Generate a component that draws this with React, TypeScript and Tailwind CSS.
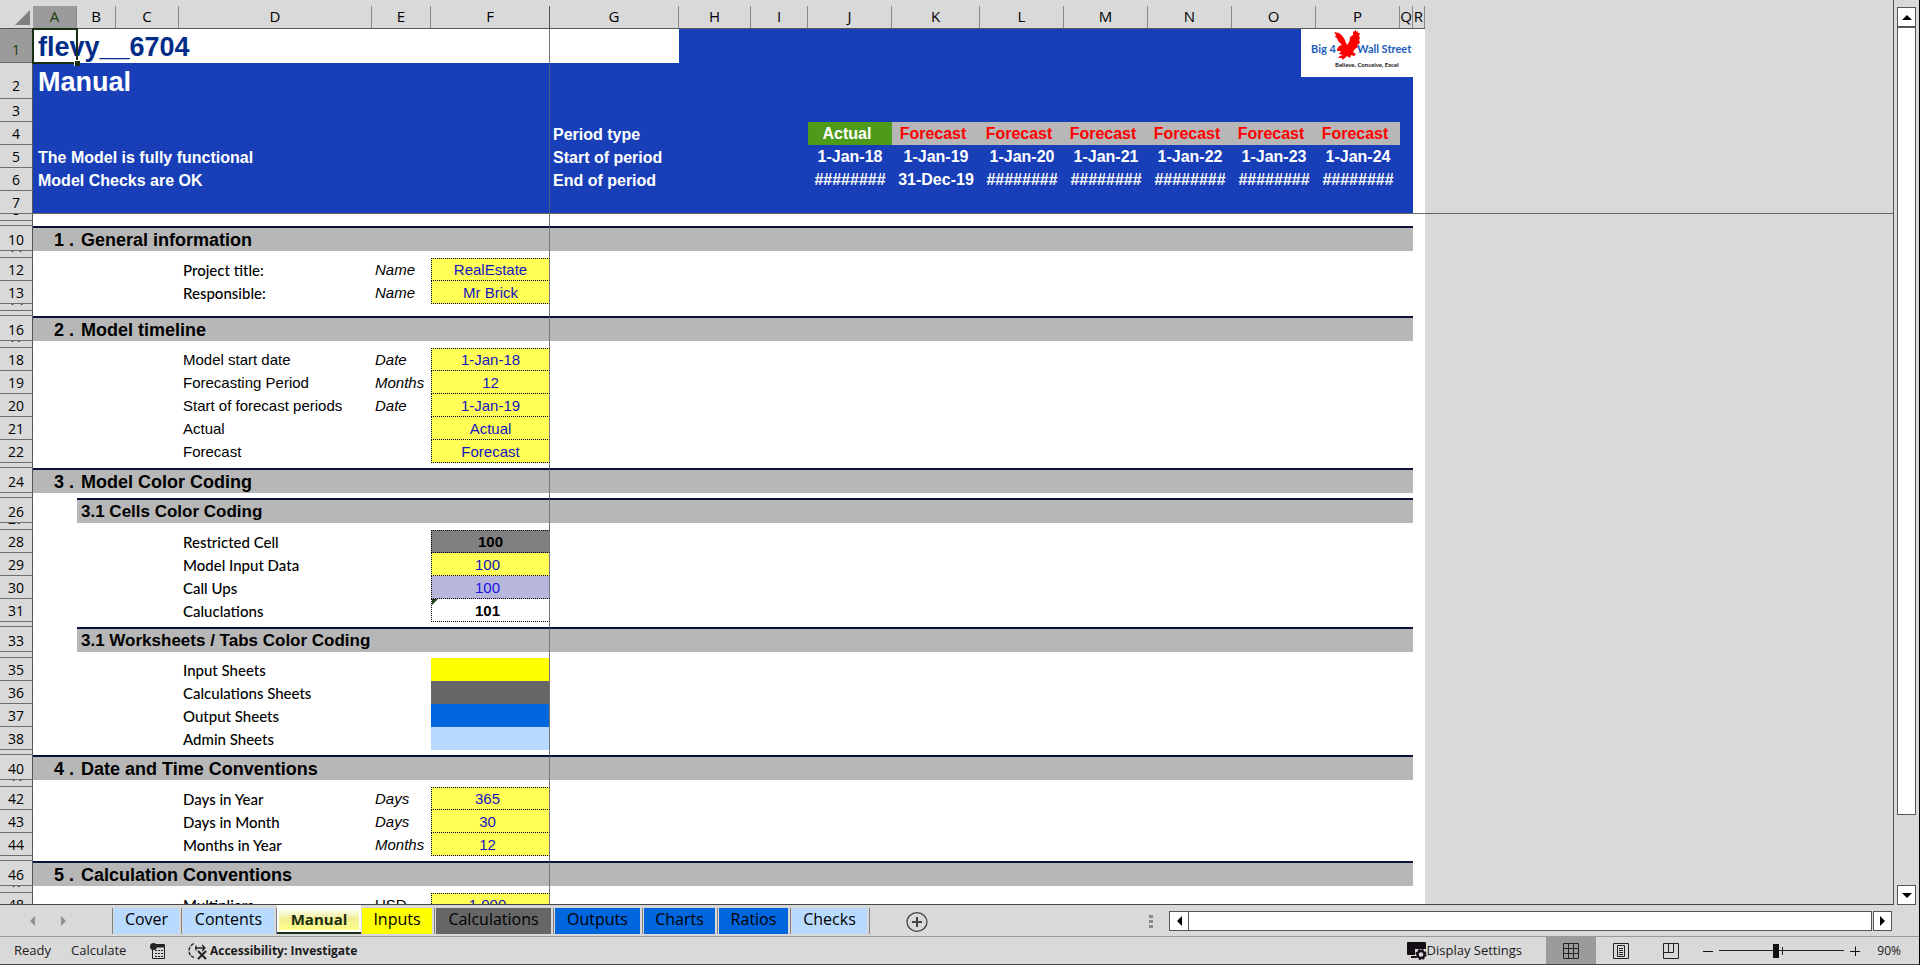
import React from "react";
import { clsx } from "clsx";

type Row = {
  n: number;
  kind: "section" | "sub" | "gap" | "line";
  h?: string;
  no?: string;
  title?: string;
  plain?: boolean;
  unit?: string;
  unitPlain?: boolean;
  value?: string;
  cell?: string;
  first?: boolean;
  flag?: boolean;
};

const dotted = "border-l border-b border-dotted border-l-black border-b-black";
const yellow = `${dotted} bg-[#ffff55] text-[#1414c0]`;
const yellowNumber = `${yellow} pr-1.5`;

const columns = [
  { name: "A", width: "w-[44px]" },
  { name: "B", width: "w-[39px]" },
  { name: "C", width: "w-[63px]" },
  { name: "D", width: "w-[193px]" },
  { name: "E", width: "w-[59px]" },
  { name: "F", width: "w-[119px]" },
  { name: "G", width: "w-[129px]" },
  { name: "H", width: "w-[72px]" },
  { name: "I", width: "w-[57px]" },
  { name: "J", width: "w-[84px]" },
  { name: "K", width: "w-[88px]" },
  { name: "L", width: "w-[84px]" },
  { name: "M", width: "w-[84px]" },
  { name: "N", width: "w-[84px]" },
  { name: "O", width: "w-[84px]" },
  { name: "P", width: "w-[84px]" },
  { name: "Q", width: "w-[13px]" },
  { name: "R", width: "w-[12px]" },
];

const rows: Row[] = [
  { n: 8, kind: "gap", h: "h-[7px]" },
  { n: 9, kind: "gap", h: "h-[5px]" },
  { n: 10, kind: "section", no: "1 .", title: "General information" },
  { n: 11, kind: "gap", h: "h-[7px]" },
  { n: 12, kind: "line", title: "Project title:", unit: "Name", value: "RealEstate", cell: yellow, first: true },
  { n: 13, kind: "line", title: "Responsible:", unit: "Name", value: "Mr Brick", cell: yellow },
  { n: 14, kind: "gap", h: "h-[7px]" },
  { n: 15, kind: "gap", h: "h-[5px]" },
  { n: 16, kind: "section", no: "2 .", title: "Model timeline" },
  { n: 17, kind: "gap", h: "h-[7px]" },
  { n: 18, kind: "line", title: "Model start date", plain: true, unit: "Date", value: "1-Jan-18", cell: yellow, first: true },
  { n: 19, kind: "line", title: "Forecasting Period", plain: true, unit: "Months", value: "12", cell: yellow },
  { n: 20, kind: "line", title: "Start of forecast periods", plain: true, unit: "Date", value: "1-Jan-19", cell: yellow },
  { n: 21, kind: "line", title: "Actual", plain: true, value: "Actual", cell: yellow },
  { n: 22, kind: "line", title: "Forecast", plain: true, value: "Forecast", cell: yellow },
  { n: 23, kind: "gap", h: "h-[5px]" },
  { n: 24, kind: "section", no: "3 .", title: "Model Color Coding" },
  { n: 25, kind: "gap", h: "h-[5px]" },
  { n: 26, kind: "sub", title: "3.1 Cells Color Coding" },
  { n: 27, kind: "gap", h: "h-[7px]" },
  { n: 28, kind: "line", title: "Restricted Cell", value: "100", cell: `${dotted} bg-[#808080] font-bold`, first: true },
  { n: 29, kind: "line", title: "Model Input Data", value: "100", cell: yellowNumber },
  { n: 30, kind: "line", title: "Call Ups", value: "100", cell: `${dotted} bg-[#b7b7dc] text-[#1414e6] pr-1.5` },
  { n: 31, kind: "line", title: "Caluclations", value: "101", cell: `${dotted} bg-white font-bold pr-1.5`, flag: true },
  { n: 32, kind: "gap", h: "h-[5px]" },
  { n: 33, kind: "sub", title: "3.1 Worksheets / Tabs Color Coding" },
  { n: 34, kind: "gap", h: "h-[6px]" },
  { n: 35, kind: "line", title: "Input Sheets", cell: "bg-[#ffff00]" },
  { n: 36, kind: "line", title: "Calculations Sheets", cell: "bg-[#666666]" },
  { n: 37, kind: "line", title: "Output Sheets", cell: "bg-[#0066dd]" },
  { n: 38, kind: "line", title: "Admin Sheets", cell: "bg-[#b8daff]" },
  { n: 39, kind: "gap", h: "h-[5px]" },
  { n: 40, kind: "section", no: "4 .", title: "Date and Time Conventions" },
  { n: 41, kind: "gap", h: "h-[7px]" },
  { n: 42, kind: "line", title: "Days in Year", unit: "Days", value: "365", cell: yellowNumber, first: true },
  { n: 43, kind: "line", title: "Days in Month", unit: "Days", value: "30", cell: yellowNumber },
  { n: 44, kind: "line", title: "Months in Year", unit: "Months", value: "12", cell: yellowNumber },
  { n: 45, kind: "gap", h: "h-[5px]" },
  { n: 46, kind: "section", no: "5 .", title: "Calculation Conventions" },
  { n: 47, kind: "gap", h: "h-[7px]" },
  { n: 48, kind: "line", title: "Multipliers", unit: "USD", unitPlain: true, value: "1,000", cell: yellowNumber, first: true },
];

const periods = [
  { type: "Actual", start: "1-Jan-18", end: "########" },
  { type: "Forecast", start: "1-Jan-19", end: "31-Dec-19" },
  { type: "Forecast", start: "1-Jan-20", end: "########" },
  { type: "Forecast", start: "1-Jan-21", end: "########" },
  { type: "Forecast", start: "1-Jan-22", end: "########" },
  { type: "Forecast", start: "1-Jan-23", end: "########" },
  { type: "Forecast", start: "1-Jan-24", end: "########" },
];

const tabs = [
  { name: "Cover", width: "w-[70px]", color: "bg-[#b8daff]" },
  { name: "Contents", width: "w-[95px]", color: "bg-[#b8daff]" },
  { name: "Manual", width: "w-[84px]", color: "" },
  { name: "Inputs", width: "w-[74px]", color: "bg-[#ffff00]" },
  { name: "Calculations", width: "w-[119px]", color: "bg-[#666666]" },
  { name: "Outputs", width: "w-[89px]", color: "bg-[#0066dd]" },
  { name: "Charts", width: "w-[75px]", color: "bg-[#0066dd]" },
  { name: "Ratios", width: "w-[73px]", color: "bg-[#0066dd]" },
  { name: "Checks", width: "w-[79px]", color: "bg-[#b8daff]" },
];

const RowNumber = ({ n, active }: { n: number; active?: boolean }) => (
  <th
    scope="row"
    className={clsx(
      "border-r border-b border-r-[#555] border-b-[#6e6e6e] px-0 pt-0 text-center align-bottom font-['Open_Sans',sans-serif] text-sm leading-5 font-normal",
      active ? "bg-[#9b9b9b] text-[#1c3a12]" : "bg-[#d9d9d9] text-black",
      n <= 2 ? "pb-0.5" : "pb-0",
    )}
  >
    {n}
  </th>
);

// Narrow rows only leave the feet of their number visible
const GapNumber = ({ n, h }: { n: number; h?: string }) => (
  <th scope="row" className="border-r border-b border-r-[#555] border-b-[#6e6e6e] bg-[#d9d9d9] p-0 font-normal">
    <div
      className={clsx(
        "flex items-end justify-center overflow-hidden font-['Open_Sans',sans-serif] text-sm leading-5",
        h === "h-[5px]" ? "h-1" : h === "h-[6px]" ? "h-[5px]" : "h-1.5",
      )}
    >
      {h !== "h-[5px]" && n}
    </div>
  </th>
);

const Logo = () => (
  <svg viewBox="0 0 112 48" className="absolute top-0 right-0 h-12 w-28" role="img" aria-label="Big 4 Wall Street">
    <rect width="112" height="48" fill="#fff" />
    <g fontFamily="Lato, sans-serif" fontWeight="700">
      <text x="10" y="24" fontSize="11" fill="#1a5db8">Big 4</text>
      <text x="56" y="24" fontSize="11" fill="#1a5db8">Wall Street</text>
      <text x="34" y="38" fontSize="6" fill="#111">Believe, Conceive, Excel</text>
    </g>
    <path
      d="M33 3 L38 4 C42 7 44 10 45 14 L46 16 C48 14 49 11 49 8 L52 6 L52 3 L55 1 L55 3 L57 2 L57 4 L59 4 L58 7 L59 9 L58 11 L59 14 L56 16 L57 18 L54 20 L52 23 L55 25 L53 27 L50 26 L49 29 L46 27 L44 29 L41 31 L41 29 L37 29 L39 27 L42 26 L38 25 L40 22 L36 22 L36 20 L38 17 L41 16 C38 13 36 11 36 9 L34 8 L35 6 Z"
      fill="#f00"
    />
  </svg>
);

const HeaderLead = ({ n, text, className }: { n: number; text?: string; className?: string }) => (
  <>
    <RowNumber n={n} />
    <td colSpan={6} className={clsx("border-r border-[#4a5a80] pt-0 pr-0 pl-[5px] align-bottom", className ?? "pb-0")}>
      {text}
    </td>
  </>
);

const HeaderEnd = () => (
  <>
    <td className="bg-white p-0" />
    <td className="bg-[#d9d9d9] p-0" />
  </>
);

const HeaderRows = () => (
  <>
    <tr className="h-[34px] font-bold">
      <RowNumber n={1} active />
      <td colSpan={6} className="relative border-r border-[#777] bg-white py-0 pr-0 pl-[5px] align-bottom text-[27px] leading-[31px] text-[#002b87]">
        flevy__6704
        <span className="absolute -top-px -left-px h-9 w-[46px] border-2 border-[#1a2e12]">
          <span className="absolute -right-1 -bottom-1 size-1.5 border-t border-l border-white bg-[#1a2e12]" />
        </span>
      </td>
      <td className="bg-white p-0" />
      <td colSpan={10} className="relative bg-[#183fb8] p-0">
        <Logo />
      </td>
      <td className="bg-white p-0" />
      <td className="p-0" />
    </tr>
    <tr className="h-9 bg-[#183fb8] font-bold text-white">
      <HeaderLead n={2} className="pb-px text-[27px] leading-[31px]" text="Manual" />
      <td colSpan={11} className="p-0" />
      <HeaderEnd />
    </tr>
    <tr className="h-[23px] bg-[#183fb8]">
      <HeaderLead n={3} />
      <td colSpan={11} className="p-0" />
      <HeaderEnd />
    </tr>
    <tr className="h-[23px] bg-[#183fb8] font-bold text-white">
      <HeaderLead n={4} />
      <td colSpan={3} className="py-0 pr-0 pl-[3px] align-bottom">Period type</td>
      {periods.map((p, i) => (
        <td
          key={i}
          className={clsx("py-0 pr-1.5 pb-px pl-0 text-center align-bottom", i === 0 ? "bg-[#4e9a19]" : "bg-[#b7b7b7] text-[#ff0000]")}
        >
          {p.type}
        </td>
      ))}
      <td className="p-0" />
      <HeaderEnd />
    </tr>
    <tr className="h-[23px] bg-[#183fb8] font-bold text-white">
      <HeaderLead n={5} text="The Model is fully functional" />
      <td colSpan={3} className="py-0 pr-0 pl-[3px] align-bottom">Start of period</td>
      {periods.map((p, i) => (
        <td key={i} className="p-0 pb-px text-center align-bottom">{p.start}</td>
      ))}
      <td className="p-0" />
      <HeaderEnd />
    </tr>
    <tr className="h-[23px] bg-[#183fb8] font-bold text-white">
      <HeaderLead n={6} text="Model Checks are OK" />
      <td colSpan={3} className="py-0 pr-0 pl-[3px] align-bottom">End of period</td>
      {periods.map((p, i) => (
        <td key={i} className="p-0 pb-px text-center align-bottom">{p.end}</td>
      ))}
      <td className="p-0" />
      <HeaderEnd />
    </tr>
    <tr className="h-[23px] bg-[#183fb8]">
      <RowNumber n={7} />
      <td colSpan={6} className="border-r border-b border-r-[#4a5a80] border-b-[#666] p-0" />
      <td colSpan={11} className="border-b border-[#666] p-0" />
      <td className="border-b border-[#666] bg-white p-0" />
      <td className="border-b border-[#666] bg-[#d9d9d9] p-0" />
    </tr>
  </>
);

const BodyRow = ({ row }: { row: Row }) => {
  if (row.kind === "gap") {
    return (
      <tr className={row.h}>
        <GapNumber n={row.n} h={row.h} />
        <td colSpan={6} className="border-r border-[#777] bg-white p-0" />
        <td colSpan={12} className="bg-white p-0" />
        <td className="p-0" />
      </tr>
    );
  }
  if (row.kind === "section" || row.kind === "sub") {
    const bar = "border-t-2 border-t-[#0a1238] bg-[#b7b7b7]";
    return (
      <tr className="h-[25px] font-bold">
        <RowNumber n={row.n} />
        <td className={clsx("py-0 pr-[3px] pl-0 text-right align-bottom text-lg leading-[22px]", row.kind === "section" ? bar : "bg-white")}>
          {row.no}
        </td>
        <td
          colSpan={5}
          className={clsx(
            "border-r border-r-[#777] py-0 pr-0 pl-1 align-bottom whitespace-nowrap",
            bar,
            row.kind === "section" ? "text-lg leading-[22px]" : "text-[17px] leading-[22px]",
          )}
        >
          {row.title}
        </td>
        <td colSpan={11} className={clsx("p-0", bar)} />
        <td className="bg-white p-0" />
        <td className="p-0" />
      </tr>
    );
  }
  return (
    <tr className="h-[23px] text-[15px] leading-5">
      <RowNumber n={row.n} />
      <td colSpan={3} className="bg-white p-0" />
      <td
        className={clsx(
          "bg-white pt-0 pr-0 pb-px pl-1 align-bottom whitespace-nowrap",
          !row.plain && "font-['Lato',sans-serif] font-medium",
        )}
      >
        {row.title}
      </td>
      <td className={clsx("bg-white pt-0 pr-0 pb-px pl-[3px] align-bottom", !row.unitPlain && "italic")}>{row.unit}</td>
      <td
        className={clsx(
          "relative border-r border-r-[#777] p-0 text-center align-bottom [border-right-style:solid]",
          row.first && "border-t border-t-black",
          row.cell,
        )}
      >
        {row.flag && (
          <svg viewBox="0 0 6 6" className="absolute top-0 left-0 size-1.5">
            <path d="M0 0h6L0 6z" fill="#1d4016" />
          </svg>
        )}
        {row.value}
      </td>
      <td colSpan={12} className="bg-white p-0" />
      <td className="p-0" />
    </tr>
  );
};

const Sheet = () => (
  <div className="min-w-0 flex-1 overflow-hidden border-b border-[#444]">
    <table className="w-full table-fixed border-separate border-spacing-0 font-['Liberation_Sans',Arial,sans-serif] text-base leading-5 text-black">
      <colgroup>
        <col className="w-[33px]" />
        {columns.map((c) => (
          <col key={c.name} className={c.width} />
        ))}
        <col />
      </colgroup>
      <thead>
        <tr className="h-[29px] font-['Open_Sans',sans-serif] text-[15px]">
          <td className="border-b border-[#555] px-[3px] pt-2 pb-[3px] align-bottom">
            <svg viewBox="0 0 15 15" className="ml-auto size-[15px]">
              <path d="M15 0v15H0z" fill="#808080" />
            </svg>
          </td>
          {columns.map((c) => (
            <th key={c.name} scope="col" className="border-b border-[#555] px-0 pt-1.5 pb-0 font-normal">
              <div
                className={clsx(
                  "flex h-[22px] items-start justify-center border-r leading-5",
                  c.name === "A" && "bg-[#9b9b9b] text-[#1c3a12]",
                  c.name === "F" ? "border-[#555]" : "border-[#8a8a8a]",
                )}
              >
                {c.name}
              </div>
            </th>
          ))}
          <td className="p-0" />
        </tr>
      </thead>
      <tbody>
        <HeaderRows />
        {rows.map((row) => (
          <BodyRow key={row.n} row={row} />
        ))}
      </tbody>
    </table>
  </div>
);

const VerticalScroll = () => (
  <div className="flex w-[26px] shrink-0 flex-col border-l border-[#555] px-[3px] pt-[7px]">
    <button aria-label="Scroll up" className="flex h-5 w-[19px] shrink-0 items-center justify-center border border-[#555] bg-white">
      <svg viewBox="0 0 10 5" className="h-[5px] w-2.5"><path d="M0 5 5 0l5 5z" /></svg>
    </button>
    <div className="h-[788px] w-[19px] border border-[#555] bg-white" />
    <button aria-label="Scroll down" className="mt-auto flex h-5 w-[19px] shrink-0 items-center justify-center border border-[#555] bg-white">
      <svg viewBox="0 0 10 5" className="h-[5px] w-2.5"><path d="M0 0l5 5 5-5z" /></svg>
    </button>
  </div>
);

const TabBar = () => (
  <div className="flex h-8 shrink-0 items-start border-b border-[#999] font-['Open_Sans',sans-serif]">
    <div className="flex h-8 w-[112px] shrink-0 items-center gap-[26px] pl-[30px]">
      <button aria-label="Previous sheet">
        <svg viewBox="0 0 5 10" className="h-2.5 w-[5px]"><path d="M5 0v10L0 5z" fill="#8f8f8f" /></svg>
      </button>
      <button aria-label="Next sheet">
        <svg viewBox="0 0 5 10" className="h-2.5 w-[5px]"><path d="M0 0v10l5-5z" fill="#8f8f8f" /></svg>
      </button>
    </div>
    {tabs.map((tab) =>
      tab.name === "Manual" ? (
        <button
          key={tab.name}
          className={clsx("flex h-[29px] shrink-0 flex-col border-b-2 border-[#1a2e12] bg-white px-0.5 pt-[3px] pb-0.5", tab.width)}
        >
          <span className="block h-full w-full bg-linear-to-b from-white via-[#f0ee90] to-[#ffff88] text-center text-[15px] leading-[22px] font-bold text-[#1a2e12]">
            {tab.name}
          </span>
        </button>
      ) : (
        <div
          key={tab.name}
          className={clsx("mt-[3px] h-[26px] shrink-0 border-r border-[#808080] pr-0.5 pl-px", tab.name === "Cover" && "border-l", tab.width)}
        >
          <button className={clsx("flex h-full w-full items-start justify-center text-base leading-[22px]", tab.color)}>{tab.name}</button>
        </div>
      ),
    )}
    <button aria-label="New sheet" className="mt-[7px] ml-9 shrink-0">
      <svg viewBox="0 0 22 20" className="h-5 w-[22px]" fill="none" stroke="#444">
        <ellipse cx="11" cy="10" rx="10" ry="9.3" strokeWidth="1.3" />
        <path d="M11 5v10M6 10h10" strokeWidth="2" />
      </svg>
    </button>
    <div className="mt-2.5 ml-auto flex flex-col gap-0.5 pr-4">
      <span className="h-[3px] w-1 bg-[#8a8a8a]" />
      <span className="h-[3px] w-1 bg-[#8a8a8a]" />
      <span className="h-[3px] w-1 bg-[#8a8a8a]" />
    </div>
    <div className="mt-1.5 mr-[27px] flex h-5 w-[38%] max-w-[723px] shrink-0">
      <button aria-label="Scroll left" className="flex w-5 shrink-0 items-center justify-center border border-[#555] bg-white">
        <svg viewBox="0 0 5 10" className="h-2.5 w-[5px]"><path d="M5 0v10L0 5z" /></svg>
      </button>
      <div className="mr-px flex-1 border border-l-0 border-[#555] bg-white" />
      <button aria-label="Scroll right" className="flex w-[19px] shrink-0 items-center justify-center border border-[#555] bg-white">
        <svg viewBox="0 0 5 10" className="h-2.5 w-[5px]"><path d="M0 0v10l5-5z" /></svg>
      </button>
    </div>
  </div>
);

const StatusBar = () => (
  <div className="flex h-7 shrink-0 items-center border-b border-[#444] font-['Open_Sans',sans-serif] text-[13px] text-[#1a1a1a]">
    <span className="ml-3.5 w-[57px]">Ready</span>
    <span className="w-[79px]">Calculate</span>
    <button aria-label="Record macro">
      <svg viewBox="0 0 16 16" className="size-4" fill="none" stroke="#222">
        <path d="M2.500 5v10.500h12v-14H6" />
        <path d="M7 3h7" strokeWidth="3" />
        <path d="M5 7.500h8M5 10.500h8M5 13.500h8" strokeDasharray="2 1" />
        <circle cx="3.500" cy="3.500" r="3.500" fill="#222" stroke="none" />
      </svg>
    </button>
    <button className="ml-[22px] flex items-center gap-0.5 text-xs font-bold">
      <svg viewBox="0 0 20 18" className="h-[18px] w-5" fill="none" stroke="#222" strokeWidth="1.300">
        <path d="M6 1.500A8 8 0 0 0 1 9c0 3 2 5.500 5 6.500" strokeDasharray="4 1" />
        <path d="M7 6h10M8 3.500v5M14 3l3 3-3 3" />
        <path d="M10 9l8 8M18 9l-8 8" strokeWidth="2" />
      </svg>
      Accessibility: Investigate
    </button>
    <button className="ml-auto flex items-center">
      <svg viewBox="0 0 20 18" className="h-[18px] w-5">
        <path d="M1 0h17a1 1 0 0 1 1 1v6H8v6H1a1 1 0 0 1-1-1V1a1 1 0 0 1 1-1zM4 14h5v2H4z" fill="#140d14" />
        <circle cx="14" cy="12.500" r="3.500" fill="none" stroke="#140d14" strokeWidth="2.400" />
        <circle cx="14" cy="12.500" r="4.800" fill="none" stroke="#140d14" strokeWidth="1.600" strokeDasharray="2 1.770" />
      </svg>
      Display Settings
    </button>
    <button aria-label="Normal view" className="ml-6 flex h-full w-[50px] items-center justify-center bg-[#9b9b9b]">
      <svg viewBox="0 0 16 16" className="size-4" fill="none" stroke="#222">
        <path d="M.5.5h15v15H.5zM5.500.5v15M10.500.5v15M.5 5.500h15M.5 10.500h15" />
      </svg>
    </button>
    <button aria-label="Page layout view" className="flex h-full w-[50px] items-center justify-center">
      <svg viewBox="0 0 16 16" className="size-4" fill="none" stroke="#222">
        <path d="M.5.5h15v15H.5zM4.500 2.500h7v11h-7zM6 5.500h4M6 7.500h4M6 9.500h4M6 11.500h4" />
      </svg>
    </button>
    <button aria-label="Page break preview" className="flex h-full w-[50px] items-center justify-center">
      <svg viewBox="0 0 16 16" className="size-4" fill="none" stroke="#222">
        <path d="M.5.5h15v15H.5zM.5 9.500h10v-9M5.500.5v9" />
      </svg>
    </button>
    <button aria-label="Zoom out" className="ml-[7px] flex w-2.5 items-center">
      <svg viewBox="0 0 10 10" className="size-2.5"><path d="M0 5.500h10" stroke="#111" /></svg>
    </button>
    <div className="relative mx-1.5 flex h-4 w-[125px] items-center">
      <input
        type="range"
        aria-label="Zoom"
        defaultValue={45}
        className="h-px w-full appearance-none bg-[#222] [&::-webkit-slider-thumb]:h-3.5 [&::-webkit-slider-thumb]:w-1.5 [&::-webkit-slider-thumb]:appearance-none [&::-webkit-slider-thumb]:bg-[#140d14]"
      />
      <span className="absolute left-1/2 h-2 w-px bg-[#222]" />
    </div>
    <button aria-label="Zoom in" className="flex w-2.5 items-center">
      <svg viewBox="0 0 10 10" className="size-2.5"><path d="M0 5.500h10M5.500.5v10" stroke="#111" /></svg>
    </button>
    <span className="mr-[18px] ml-[13px] w-7 text-right text-xs">90%</span>
  </div>
);

export default function App() {
  return (
    <div className="flex h-screen w-full flex-col overflow-hidden border-r border-black bg-[#d9d9d9]">
      <div className="flex min-h-0 flex-1">
        <Sheet />
        <VerticalScroll />
      </div>
      <TabBar />
      <StatusBar />
    </div>
  );
}
